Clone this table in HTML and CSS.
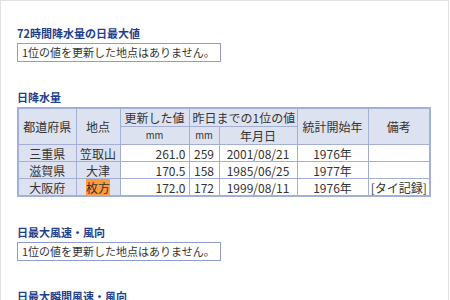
FILE: index.html
```html
<!DOCTYPE html>
<html lang="ja">
<head>
<meta charset="utf-8">
<link rel="stylesheet" href="styles.css">
</head>
<body>
<div class="page">
  <section class="sec">
    <h2 class="ttl">72時間降水量の日最大値</h2>
    <div class="note">1位の値を更新した地点はありません。</div>
  </section>
  <section class="sec sec-table">
    <h2 class="ttl">日降水量</h2>
    <table class="tbl">
      <colgroup>
        <col class="c1"><col class="c2"><col class="c3"><col class="c4"><col class="c5"><col class="c6"><col class="c7">
      </colgroup>
      <thead>
        <tr>
          <th rowspan="2">都道府県</th>
          <th rowspan="2">地点</th>
          <th>更新した値</th>
          <th colspan="2">昨日までの1位の値</th>
          <th rowspan="2">統計開始年</th>
          <th rowspan="2">備考</th>
        </tr>
        <tr>
          <th class="unit">mm</th>
          <th class="unit">mm</th>
          <th>年月日</th>
        </tr>
      </thead>
      <tbody>
        <tr>
          <td class="hd">三重県</td><td class="hd">笠取山</td><td class="num">261.0</td><td>259</td><td>2001/08/21</td><td>1976年</td><td></td>
        </tr>
        <tr>
          <td class="hd">滋賀県</td><td class="hd">大津</td><td class="num">170.5</td><td>158</td><td>1985/06/25</td><td>1977年</td><td></td>
        </tr>
        <tr>
          <td class="hd">大阪府</td><td class="hd"><span class="mark">枚方</span></td><td class="num">172.0</td><td>172</td><td>1999/08/11</td><td>1976年</td><td class="rem">[タイ記録]</td>
        </tr>
      </tbody>
    </table>
  </section>
  <section class="sec">
    <h2 class="ttl">日最大風速・風向</h2>
    <div class="note">1位の値を更新した地点はありません。</div>
  </section>
  <section class="sec">
    <h2 class="ttl">日最大瞬間風速・風向</h2>
  </section>
</div>
</body>
</html>
```
FILE: styles.css
```css
html, body {
  margin: 0;
  padding: 0;
  background: #fff;
}
body {
  font-family: "Noto Sans CJK JP", "Noto Sans", sans-serif;
  color: #333;
  height: 300px;
  overflow: hidden;
}
.page {
  width: 449px;
  height: 320px;
  box-sizing: border-box;
  border: 1px solid #e2e2e2;
  border-bottom: none;
  padding: 25px 0 0 16px;
}
.sec {
  display: flex;
  flex-direction: column;
  align-items: flex-start;
  margin-bottom: 28px;
}
.sec-table {
  margin-bottom: 28px;
}
.ttl {
  margin: 0 0 3px;
  font-size: 11px;
  line-height: 14px;
  font-weight: bold;
  color: #213f8c;
}
.note {
  border: 1px solid #8f9dcc;
  font-size: 11px;
  line-height: 17px;
  padding: 0 5px 0 4px;
  color: #333;
}
.tbl {
  border-collapse: collapse;
  table-layout: fixed;
  width: 412px;
  border: 2px solid #a3afd6;
  font-size: 12px;
  color: #333;
}
.tbl th, .tbl td {
  border: 1px solid #a3afd6;
  padding: 0 3px;
  line-height: 15px;
  text-align: center;
  font-weight: normal;
  white-space: nowrap;
}
.tbl th {
  background: #dde2f0;
  height: 17px;
}
.tbl td {
  height: 16px;
  background: #fff;
}
.tbl td.hd {
  background: #dde2f0;
}
.tbl td.num {
  text-align: right;
}
.tbl td.rem {
  padding: 0;
}
.tbl th.unit {
  font-size: 9.5px;
}
.c1 { width: 58px; }
.c2 { width: 44px; }
.c3 { width: 69px; }
.c4 { width: 30px; }
.c5 { width: 78px; }
.c6 { width: 71px; }
.c7 { width: 62px; }
.mark {
  background: #ff9b3d;
}
```
